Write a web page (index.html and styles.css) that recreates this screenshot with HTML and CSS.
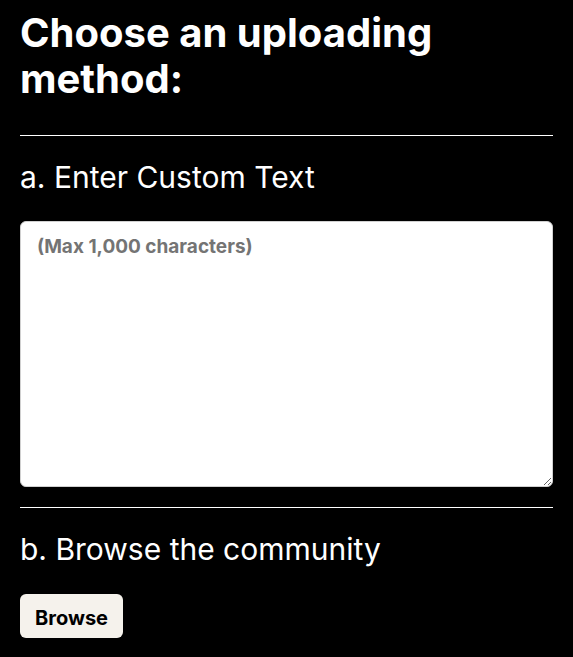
FILE: index.html
```html
<!DOCTYPE html>
<html>
<head>
<meta charset="utf-8">
<link rel="stylesheet" href="styles.css">
</head>
<body>
<main class="page">
  <h1 class="title">Choose an uploading method:</h1>
  <hr class="rule">
  <h2 class="section-title">a. Enter Custom Text</h2>
  <textarea class="text-input" placeholder="(Max 1,000 characters)"></textarea>
  <hr class="rule rule-b">
  <h2 class="section-title">b. Browse the community</h2>
  <button class="browse-btn" type="button">Browse</button>
</main>
</body>
</html>
```
FILE: styles.css
```css
html, body {
  margin: 0;
  padding: 0;
  background: #000;
}
body {
  font-family: Inter, "Noto Sans", sans-serif;
  color: #fff;
}
.page {
  padding: 10px 20px 20px;
  display: flex;
  flex-direction: column;
}
.title {
  margin: 0;
  font-size: 40px;
  font-weight: 700;
  line-height: 46px;
}
.rule {
  width: 100%;
  margin: 33px 0 0;
  border: 0;
  height: 1px;
  background: #fff;
}
.rule-b {
  margin-top: 20px;
}
.section-title {
  margin: 23px 0 0;
  font-size: 30px;
  font-weight: 400;
  line-height: 36px;
}
.text-input {
  box-sizing: border-box;
  margin-top: 26px;
  width: 100%;
  height: 266px;
  border: 1px solid #d0d0d0;
  border-radius: 6px;
  background: #fff;
  padding: 13px 16px;
  font-family: Inter, sans-serif;
  font-size: 19px;
  font-weight: 700;
  color: #333;
  resize: vertical;
}
.text-input::placeholder {
  color: #747474;
}
.browse-btn {
  align-self: flex-start;
  margin-top: 27px;
  height: 44px;
  padding: 3px 15px 0;
  border: 0;
  border-radius: 6px;
  background: #f5f2ec;
  color: #000;
  font-family: Inter, sans-serif;
  font-size: 20px;
  font-weight: 700;
  cursor: pointer;
}
```
